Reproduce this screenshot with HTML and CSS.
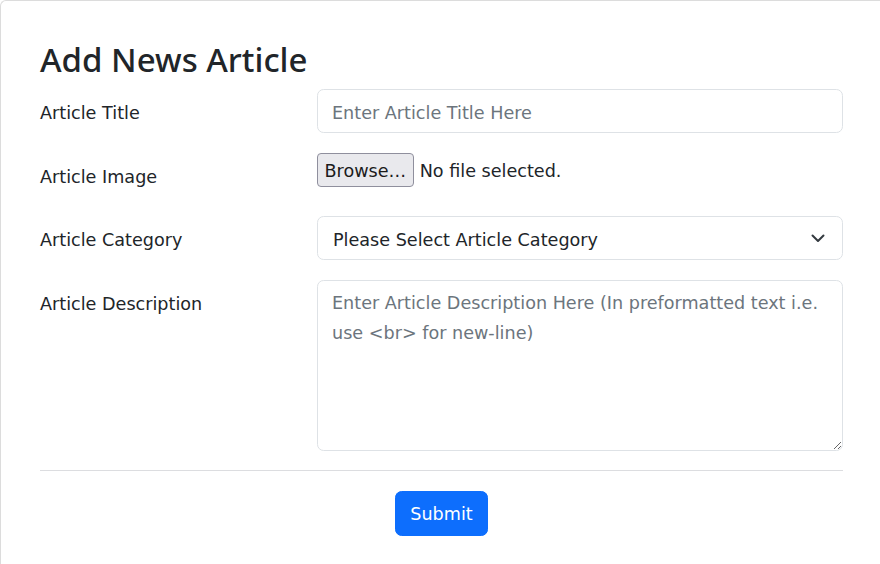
FILE: index.html
```html
<!DOCTYPE html>
<html lang="en">
<head>
<meta charset="utf-8">
<title>Add News Article</title>
<link rel="stylesheet" href="styles.css">
</head>
<body>
<div class="card">
  <h1 class="card-title">Add News Article</h1>
  <form class="article-form">
    <div class="form-row">
      <label class="form-label" for="title">Article Title</label>
      <input class="form-control" id="title" type="text" placeholder="Enter Article Title Here">
    </div>
    <div class="form-row">
      <label class="form-label">Article Image</label>
      <div class="file-field">
        <button type="button" class="file-button">Browse…</button>
        <span class="file-status">No file selected.</span>
      </div>
    </div>
    <div class="form-row">
      <label class="form-label" for="category">Article Category</label>
      <select class="form-select" id="category">
        <option>Please Select Article Category</option>
      </select>
    </div>
    <div class="form-row">
      <label class="form-label" for="desc">Article Description</label>
      <textarea class="form-control form-textarea" id="desc" placeholder="Enter Article Description Here (In preformatted text i.e. use <br> for new-line)"></textarea>
    </div>
    <hr class="divider">
    <div class="actions">
      <button type="button" class="btn-primary">Submit</button>
    </div>
  </form>
</div>
</body>
</html>
```
FILE: styles.css
```css
html, body {
  margin: 0;
  padding: 0;
  overflow: hidden;
  background: #ffffff;
}

body {
  font-family: "DejaVu Sans", "Noto Sans", sans-serif;
  font-size: 17.6px;
  color: #212529;
}

.card {
  box-sizing: border-box;
  width: 880px;
  height: 564px;
  border-top: 1px solid #dcdcdc;
  border-left: 1px solid #dcdcdc;
  border-top-left-radius: 6px;
  padding: 39px 37px 0 39px;
}

.card-title {
  margin: 0 0 9.5px 0;
  font-family: "Noto Sans", "DejaVu Sans", sans-serif;
  font-weight: 500;
  font-size: 33px;
  line-height: 39.6px;
  color: #212529;
}

.article-form {
  margin: 0;
}

.form-row {
  display: grid;
  grid-template-columns: 277px 1fr;
  align-items: start;
  margin-bottom: 19.5px;
}

.form-label {
  display: block;
  padding-top: 4px;
  line-height: 40px;
  color: #212529;
}

.form-control,
.form-select {
  box-sizing: border-box;
  width: 100%;
  height: 44px;
  margin: 0;
  border: 1px solid #dee2e6;
  border-radius: 6.6px;
  background-color: #ffffff;
  font-family: "DejaVu Sans", "Noto Sans", sans-serif;
  font-size: 17.6px;
  color: #212529;
  padding: 4px 14px 0 14px;
  outline: none;
}

.form-control::placeholder {
  color: #6c757d;
  opacity: 1;
}

.form-select {
  -webkit-appearance: none;
  appearance: none;
  padding: 4px 40px 0 15px;
  background-image: url("data:image/svg+xml,%3csvg xmlns='http://www.w3.org/2000/svg' viewBox='0 0 14 9'%3e%3cpath fill='none' stroke='%23343a40' stroke-linecap='round' stroke-linejoin='round' stroke-width='2' d='M1.5 1.5 7 7l5.5-5.5'/%3e%3c/svg%3e");
  background-repeat: no-repeat;
  background-position: right 17px center;
  background-size: 14px 9px;
}

.form-textarea {
  height: 171px;
  padding: 7px 14px;
  line-height: 30px;
  resize: vertical;
  display: block;
}

.file-field {
  display: flex;
  align-items: center;
  gap: 6px;
}

.file-button {
  box-sizing: border-box;
  height: 34.5px;
  margin: 0;
  padding: 2px 6.5px 0 6.5px;
  border: 1px solid #8f8f9d;
  border-radius: 4px;
  background: #e9e9ed;
  color: #1b1b1b;
  font-family: "DejaVu Sans", "Noto Sans", sans-serif;
  font-size: 17.6px;
}

.file-status {
  color: #212529;
  padding-top: 2px;
}

.divider {
  margin: 0;
  border: 0;
  border-top: 1px solid #dcdde0;
}

.actions {
  display: flex;
  justify-content: center;
  padding-top: 20px;
}

.btn-primary {
  box-sizing: border-box;
  width: 93px;
  height: 45px;
  border: 1px solid #0d6efd;
  border-radius: 6.6px;
  background: #0d6efd;
  color: #ffffff;
  font-family: "DejaVu Sans", "Noto Sans", sans-serif;
  font-size: 17.6px;
  padding: 0;
}
```
